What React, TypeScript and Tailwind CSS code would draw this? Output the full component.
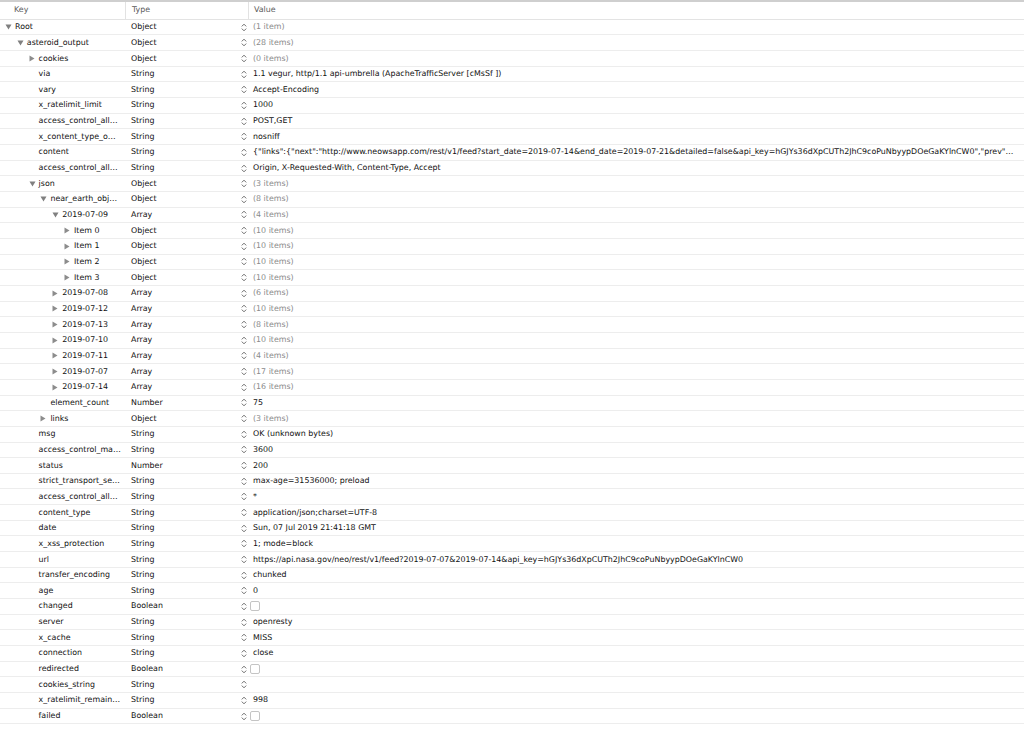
type Row = {
  key: string;
  type: string;
  value?: string;
  depth: number;
  node?: "open" | "closed";
  count?: boolean;
  bool?: boolean;
};

const rows: Row[] = [
  { key: "Root", type: "Object", value: "(1 item)", depth: 0, node: "open", count: true },
  { key: "asteroid_output", type: "Object", value: "(28 items)", depth: 1, node: "open", count: true },
  { key: "cookies", type: "Object", value: "(0 items)", depth: 2, node: "closed", count: true },
  { key: "via", type: "String", value: "1.1 vegur, http/1.1 api-umbrella (ApacheTrafficServer [cMsSf ])", depth: 2 },
  { key: "vary", type: "String", value: "Accept-Encoding", depth: 2 },
  { key: "x_ratelimit_limit", type: "String", value: "1000", depth: 2 },
  { key: "access_control_all…", type: "String", value: "POST,GET", depth: 2 },
  { key: "x_content_type_o…", type: "String", value: "nosniff", depth: 2 },
  {
    key: "content",
    type: "String",
    value:
      '{"links":{"next":"http://www.neowsapp.com/rest/v1/feed?start_date=2019-07-14&end_date=2019-07-21&detailed=false&api_key=hGJYs36dXpCUTh2JhC9coPuNbyypDOeGaKYlnCW0","prev"…',
    depth: 2,
  },
  { key: "access_control_all…", type: "String", value: "Origin, X-Requested-With, Content-Type, Accept", depth: 2 },
  { key: "json", type: "Object", value: "(3 items)", depth: 2, node: "open", count: true },
  { key: "near_earth_obj…", type: "Object", value: "(8 items)", depth: 3, node: "open", count: true },
  { key: "2019-07-09", type: "Array", value: "(4 items)", depth: 4, node: "open", count: true },
  { key: "Item 0", type: "Object", value: "(10 items)", depth: 5, node: "closed", count: true },
  { key: "Item 1", type: "Object", value: "(10 items)", depth: 5, node: "closed", count: true },
  { key: "Item 2", type: "Object", value: "(10 items)", depth: 5, node: "closed", count: true },
  { key: "Item 3", type: "Object", value: "(10 items)", depth: 5, node: "closed", count: true },
  { key: "2019-07-08", type: "Array", value: "(6 items)", depth: 4, node: "closed", count: true },
  { key: "2019-07-12", type: "Array", value: "(10 items)", depth: 4, node: "closed", count: true },
  { key: "2019-07-13", type: "Array", value: "(8 items)", depth: 4, node: "closed", count: true },
  { key: "2019-07-10", type: "Array", value: "(10 items)", depth: 4, node: "closed", count: true },
  { key: "2019-07-11", type: "Array", value: "(4 items)", depth: 4, node: "closed", count: true },
  { key: "2019-07-07", type: "Array", value: "(17 items)", depth: 4, node: "closed", count: true },
  { key: "2019-07-14", type: "Array", value: "(16 items)", depth: 4, node: "closed", count: true },
  { key: "element_count", type: "Number", value: "75", depth: 3 },
  { key: "links", type: "Object", value: "(3 items)", depth: 3, node: "closed", count: true },
  { key: "msg", type: "String", value: "OK (unknown bytes)", depth: 2 },
  { key: "access_control_ma…", type: "String", value: "3600", depth: 2 },
  { key: "status", type: "Number", value: "200", depth: 2 },
  { key: "strict_transport_se…", type: "String", value: "max-age=31536000; preload", depth: 2 },
  { key: "access_control_all…", type: "String", value: "*", depth: 2 },
  { key: "content_type", type: "String", value: "application/json;charset=UTF-8", depth: 2 },
  { key: "date", type: "String", value: "Sun, 07 Jul 2019 21:41:18 GMT", depth: 2 },
  { key: "x_xss_protection", type: "String", value: "1; mode=block", depth: 2 },
  {
    key: "url",
    type: "String",
    value: "https://api.nasa.gov/neo/rest/v1/feed?2019-07-07&2019-07-14&api_key=hGJYs36dXpCUTh2JhC9coPuNbyypDOeGaKYlnCW0",
    depth: 2,
  },
  { key: "transfer_encoding", type: "String", value: "chunked", depth: 2 },
  { key: "age", type: "String", value: "0", depth: 2 },
  { key: "changed", type: "Boolean", depth: 2, bool: true },
  { key: "server", type: "String", value: "openresty", depth: 2 },
  { key: "x_cache", type: "String", value: "MISS", depth: 2 },
  { key: "connection", type: "String", value: "close", depth: 2 },
  { key: "redirected", type: "Boolean", depth: 2, bool: true },
  { key: "cookies_string", type: "String", value: "", depth: 2 },
  { key: "x_ratelimit_remain…", type: "String", value: "998", depth: 2 },
  { key: "failed", type: "Boolean", depth: 2, bool: true },
];

function Disclosure({ node }: { node?: "open" | "closed" }) {
  if (!node) return <span className="w-[10px] shrink-0" />;
  return (
    <span className="flex w-[10px] shrink-0 items-center">
      {node === "open" ? (
        <svg width="7" height="6" viewBox="0 0 7 6">
          <path d="M0.5 0.5 L6.5 0.5 L3.5 5.5 Z" fill="#808080" />
        </svg>
      ) : (
        <svg width="6" height="7" viewBox="0 0 6 7">
          <path d="M0.5 0.5 L5.5 3.5 L0.5 6.5 Z" fill="#8c8c8c" />
        </svg>
      )}
    </span>
  );
}

function Stepper() {
  return (
    <svg width="6" height="9" viewBox="0 0 6 9" className="shrink-0">
      <path d="M0.8 3.4 L3 1.2 L5.2 3.4" fill="none" stroke="#6b6b6b" strokeWidth="1" />
      <path d="M0.8 5.6 L3 7.8 L5.2 5.6" fill="none" stroke="#6b6b6b" strokeWidth="1" />
    </svg>
  );
}

export default function App() {
  return (
    <div
      className="h-[750px] w-[1024px] overflow-hidden bg-white text-[7.9px] text-[#111]"
      style={{ fontFamily: '"DejaVu Sans", "Noto Sans", sans-serif' }}
    >
      <div className="flex h-[19.8px] items-center border-t-2 border-b border-t-[#cfcfcf] border-b-[#e3e3e3] text-[#5a5a5a]">
        <div className="w-[125px] shrink-0 pl-[14px]">Key</div>
        <div className="flex h-full w-[123px] shrink-0 items-center border-l border-[#e2e2e2] pl-[6px]">Type</div>
        <div className="flex h-full flex-1 items-center border-l border-[#e2e2e2] pl-[5px]">Value</div>
      </div>
      {rows.map((r, i) => (
        <div key={i} className="flex h-[15.66px] items-center border-b border-[#ededed] whitespace-nowrap">
          <div
            className="flex w-[125px] shrink-0 items-center overflow-hidden"
            style={{ paddingLeft: 5 + r.depth * 11.8 }}
          >
            <Disclosure node={r.node} />
            <span>{r.key}</span>
          </div>
          <div className="w-[116px] shrink-0 pl-[6px]">{r.type}</div>
          <div className="flex min-w-0 flex-1 items-center gap-[6px] overflow-hidden">
            <Stepper />
            {r.bool ? (
              <span className="-ml-[3px] h-[10px] w-[10px] shrink-0 rounded-[2px] border border-[#c4c4c4] bg-white" />
            ) : (
              <span className={r.count ? "text-[#8a8a8a]" : ""}>{r.value}</span>
            )}
          </div>
        </div>
      ))}
    </div>
  );
}
